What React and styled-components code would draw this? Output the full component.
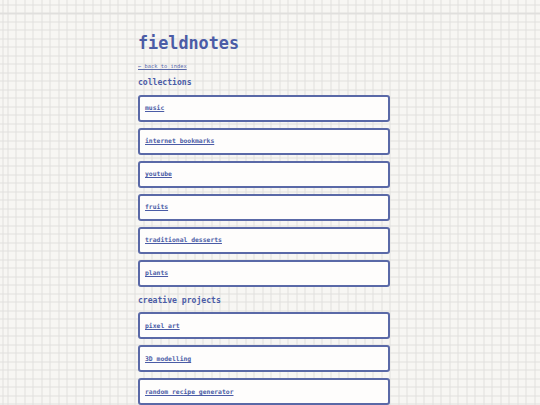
import React from "react";
import styled, { createGlobalStyle } from "styled-components";

const Global = createGlobalStyle`
  html, body {
    margin: 0;
    padding: 0;
    min-height: 100%;
  }
  body {
    background-color: #f7f6f3;
    background-image:
      repeating-linear-gradient(to right, #e0dfdd 0 1px, transparent 1px 8.5px),
      repeating-linear-gradient(to bottom, #e0dfdd 0 1px, transparent 1px 8.5px);
    background-position: 7.5px 4.5px, 7.5px 4.5px;
    font-family: "DejaVu Sans Mono", "Liberation Mono", monospace;
    color: #4b5ca6;
  }
`;

const Page = styled.div`
  display: flex;
  justify-content: center;
  padding: 32.5px 12px 0 0;
`;

const Column = styled.main`
  width: 252px;
  display: flex;
  flex-direction: column;
`;

const Title = styled.h1`
  margin: 0;
  font-size: 16.8px;
  line-height: 20px;
  font-weight: bold;
  color: #4b5ca6;
`;

const BackLink = styled.a`
  display: block;
  margin-top: 9.9px;
  font-size: 5.4px;
  line-height: 8px;
  color: #5a6aaa;
  text-decoration: underline;
`;

const SectionTitle = styled.h2`
  margin: ${(p) => (p.$first ? "6.8px" : "8.2px")} 0 7.5px;
  font-size: 8.1px;
  line-height: 10px;
  font-weight: bold;
  color: #4b5ca6;
`;

const List = styled.div`
  display: flex;
  flex-direction: column;
  gap: 6px;
`;

const Card = styled.div`
  box-sizing: border-box;
  height: 27px;
  display: flex;
  align-items: center;
  padding-left: 5px;
  background: #fefdfc;
  border: 2px solid #5a69a7;
  border-radius: 3px;
`;

const CardLink = styled.a`
  font-size: 6.4px;
  line-height: 8px;
  font-weight: bold;
  color: #4b5ca6;
  text-decoration: underline;
`;

const sections = [
  {
    title: "collections",
    items: [
      "music",
      "internet bookmarks",
      "youtube",
      "fruits",
      "traditional desserts",
      "plants",
    ],
  },
  {
    title: "creative projects",
    items: ["pixel art", "3D modelling", "random recipe generator"],
  },
];

export default function App() {
  return (
    <>
      <Global />
      <Page>
        <Column>
          <Title>fieldnotes</Title>
          <BackLink href="#">← back to index</BackLink>
          {sections.map((s, i) => (
            <section key={s.title}>
              <SectionTitle $first={i === 0}>{s.title}</SectionTitle>
              <List>
                {s.items.map((it) => (
                  <Card key={it}>
                    <CardLink href="#">{it}</CardLink>
                  </Card>
                ))}
              </List>
            </section>
          ))}
        </Column>
      </Page>
    </>
  );
}
